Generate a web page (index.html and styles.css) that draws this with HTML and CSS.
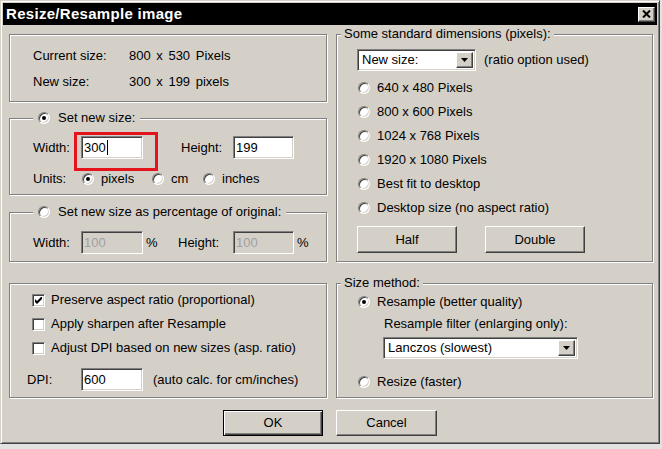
FILE: index.html
```html
<!DOCTYPE html>
<html>
<head>
<meta charset="utf-8">
<title>Resize/Resample image</title>
<link rel="stylesheet" href="styles.css">
</head>
<body>
<div class="window">
  <div class="titlebar">
    <span class="title">Resize/Resample image</span>
    <span class="close"><svg width="9" height="8" viewBox="0 0 9 8"><path d="M1 0.5 L8 7.5 M8 0.5 L1 7.5" stroke="#000" stroke-width="2" fill="none"/></svg></span>
  </div>
  <div class="content">
    <div class="col">
      <div class="group g1">
        <div class="kv"><span class="k">Current size:</span><span class="v">800 x 530 Pixels</span></div>
        <div class="kv kv2"><span class="k">New size:</span><span class="v">300 x 199 pixels</span></div>
      </div>

      <div class="group g2">
        <div class="legend legend-left"><span class="radio on"></span><span class="lbl">Set new size:</span></div>
        <div class="row size-row">
          <span class="l48">Width:</span>
          <span class="hl"><span class="field w62">300<span class="caret"></span></span></span>
          <span class="l-height">Height:</span>
          <span class="field w61">199</span>
        </div>
        <div class="row units-row">
          <span class="l49">Units:</span>
          <span class="opt o-px"><span class="radio on"></span><span class="lbl">pixels</span></span>
          <span class="opt o-cm"><span class="radio"></span><span class="lbl">cm</span></span>
          <span class="opt"><span class="radio"></span><span class="lbl">inches</span></span>
        </div>
      </div>

      <div class="group g3">
        <div class="legend legend-left"><span class="radio"></span><span class="lbl">Set new size as percentage of original:</span></div>
        <div class="row pct-row">
          <span class="l48">Width:</span>
          <span class="field w62 disabled">100</span>
          <span class="pct pct1">%</span>
          <span class="l-height2">Height:</span>
          <span class="field w61 disabled">100</span>
          <span class="pct">%</span>
        </div>
      </div>

      <div class="group g4">
        <div class="row chk-row"><span class="check"><svg width="7" height="7" viewBox="0 0 7 7"><path d="M0 2 L2 4 L7 -1 L7 2 L2 7 L0 5 Z" fill="#000"/></svg></span><span class="lbl">Preserve aspect ratio (proportional)</span></div>
        <div class="row chk-row"><span class="check"></span><span class="lbl">Apply sharpen after Resample</span></div>
        <div class="row chk-row"><span class="check"></span><span class="lbl">Adjust DPI based on new sizes (asp. ratio)</span></div>
        <div class="row dpi-row">
          <span class="l54">DPI:</span>
          <span class="field w62">600</span>
          <span class="note">(auto calc. for cm/inches)</span>
        </div>
      </div>
    </div>

    <div class="col">
      <div class="group gA">
        <div class="legend legend-right"><span>Some standard dimensions (pixels):</span></div>
        <div class="row sel-row">
          <span class="select w119"><span class="sel-text">New size:</span><span class="arrow"><svg width="7" height="4" viewBox="0 0 7 4"><path d="M0 0 H7 L3.5 4 Z" fill="#000"/></svg></span></span>
          <span class="note2">(ratio option used)</span>
        </div>
        <div class="row r-row first"><span class="radio"></span><span class="lbl">640 x 480 Pixels</span></div>
        <div class="row r-row"><span class="radio"></span><span class="lbl">800 x 600 Pixels</span></div>
        <div class="row r-row"><span class="radio"></span><span class="lbl">1024 x 768 Pixels</span></div>
        <div class="row r-row"><span class="radio"></span><span class="lbl">1920 x 1080 Pixels</span></div>
        <div class="row r-row"><span class="radio"></span><span class="lbl">Best fit to desktop</span></div>
        <div class="row r-row"><span class="radio"></span><span class="lbl">Desktop size (no aspect ratio)</span></div>
        <div class="row btn-row">
          <span class="btn">Half</span>
          <span class="btn">Double</span>
        </div>
      </div>

      <div class="group gB">
        <div class="legend legend-right"><span>Size method:</span></div>
        <div class="row r-row m-first"><span class="radio on"></span><span class="lbl">Resample (better quality)</span></div>
        <div class="row filter-lbl">Resample filter (enlarging only):</div>
        <div class="row filter-sel">
          <span class="select w195"><span class="sel-text">Lanczos (slowest)</span><span class="arrow"><svg width="7" height="4" viewBox="0 0 7 4"><path d="M0 0 H7 L3.5 4 Z" fill="#000"/></svg></span></span>
        </div>
        <div class="row r-row m-last"><span class="radio"></span><span class="lbl">Resize (faster)</span></div>
      </div>
    </div>

    <div class="actions">
      <span class="btn default ok">OK</span>
      <span class="btn cancel">Cancel</span>
    </div>
  </div>
</div>
</body>
</html>
```

FILE: styles.css
```css
* { box-sizing: border-box; }

body {
  margin: 0;
  background: #e2e2e2;
  font: 13px/16px "Liberation Sans", Arial, sans-serif;
  color: #000;
}

.window {
  width: 660px;
  height: 444px;
  background: #d4d0c8;
  border: 1px solid;
  border-color: #d4d0c8 #404040 #404040 #d4d0c8;
  box-shadow: inset 1px 1px 0 #fff, inset -1px -1px 0 #808080;
  padding: 2px;
  display: flex;
  flex-direction: column;
}

.titlebar {
  height: 22px;
  background: #000;
  display: flex;
  align-items: center;
  justify-content: space-between;
  padding: 0 2px 0 3px;
}

.title {
  color: #fff;
  font-weight: bold;
  font-size: 15px;
  letter-spacing: 0.3px;
  line-height: 18px;
}

.close {
  width: 17px;
  height: 15px;
  background: #d4d0c8;
  border: 1px solid;
  border-color: #fff #404040 #404040 #fff;
  box-shadow: inset -1px -1px 0 #808080;
  display: flex;
  align-items: center;
  justify-content: center;
}

.content {
  display: grid;
  grid-template-columns: 318px 317px;
  column-gap: 9px;
  padding: 9px 0 0 6px;
}

.col {
  display: flex;
  flex-direction: column;
}

.group {
  border: 1px solid #808080;
  box-shadow: inset 1px 1px 0 #fff, 1px 1px 0 #fff;
  display: flex;
  flex-direction: column;
  align-items: flex-start;
}

.legend {
  display: flex;
  align-items: center;
  height: 16px;
  margin-top: -9px;
  background: #d4d0c8;
}

.legend-left {
  margin-left: 0;
  padding: 0 5px;
  gap: 8px;
}

.legend-right {
  margin-left: -16px;
  padding: 0 3px;
}

.row {
  display: flex;
  align-items: center;
}

/* group 1 */
.g1 {
  height: 68px;
  padding: 13px 0 0 23px;
}
.kv { display: flex; height: 16px; }
.kv2 { margin-top: 10px; }
.k { width: 96px; }
.v { word-spacing: 2px; }

/* group 2 */
.g2 {
  height: 77px;
  margin-top: 16px;
  padding-left: 23px;
}
.size-row { margin-top: 10px; height: 23px; }
.units-row { margin-top: 12px; height: 16px; }

.l48 { width: 48px; }
.l49 { width: 49px; }
.l54 { width: 54px; }
.l-height { margin-left: 38px; width: 52px; }
.l-height2 { width: 55px; }

.hl { position: relative; display: flex; }
.hl::after {
  content: "";
  position: absolute;
  left: -7px;
  top: -4px;
  width: 78px;
  height: 33px;
  border: 3px solid #e3141b;
}

.opt { display: flex; align-items: center; gap: 7px; }
.o-px { width: 70px; }
.o-cm { width: 51px; }

/* group 3 */
.g3 {
  height: 50px;
  margin-top: 17px;
  padding-left: 23px;
}
.pct-row { margin-top: 11px; height: 23px; }
.pct { margin-left: 3px; }
.pct1 { width: 32px; }

/* group 4 */
.g4 {
  height: 115px;
  margin-top: 21px;
  padding: 8px 0 0 17px;
}
.chk-row { height: 16px; gap: 6px; margin-left: 5px; }
.chk-row + .chk-row { margin-top: 8px; }
.dpi-row { margin-top: 12px; height: 23px; }
.note { margin-left: 10px; }

/* right groups */
.gA {
  height: 228px;
  padding-left: 20px;
}
.sel-row { margin-top: 7px; height: 22px; }
.note2 { margin-left: 8px; }
.r-row { height: 16px; gap: 7px; margin-left: 1px; margin-top: 8px; }
.r-row.first { margin-top: 9px; }
.btn-row { margin-top: 10px; gap: 28px; }

.gB {
  height: 115px;
  margin-top: 21px;
  padding-left: 20px;
}
.gB .m-first { margin-top: 3px; }
.filter-lbl { margin: 6px 0 0 27px; height: 16px; }
.filter-sel { margin: 5px 0 0 26px; }
.gB .m-last { margin-top: 15px; }

/* controls */
.field {
  height: 23px;
  background: #fff;
  border: 1px solid;
  border-color: #808080 #fff #fff #808080;
  box-shadow: inset 1px 1px 0 #404040, inset -1px -1px 0 #d4d0c8;
  padding: 0 2px;
  display: flex;
  align-items: center;
}
.field.disabled { background: #d4d0c8; color: #a0a0a0; }
.w62 { width: 62px; }
.w61 { width: 61px; }

.caret {
  width: 1px;
  height: 15px;
  background: #000;
  margin-left: 1px;
}

.radio {
  flex: none;
  position: relative;
  width: 12px;
  height: 12px;
  border-radius: 50%;
  background: #fff;
  border: 1px solid;
  border-color: #808080 #fff #fff #808080;
  box-shadow: inset 1px 1px 0 #404040, inset -1px -1px 0 #d4d0c8;
}
.radio.on::after {
  content: "";
  position: absolute;
  left: 3px;
  top: 3px;
  width: 4px;
  height: 4px;
  border-radius: 50%;
  background: #000;
}

.check {
  flex: none;
  width: 13px;
  height: 13px;
  background: #fff;
  border: 1px solid;
  border-color: #808080 #fff #fff #808080;
  box-shadow: inset 1px 1px 0 #404040, inset -1px -1px 0 #d4d0c8;
  display: flex;
  align-items: center;
  justify-content: center;
}

.select {
  height: 22px;
  background: #fff;
  border: 1px solid;
  border-color: #808080 #fff #fff #808080;
  box-shadow: inset 1px 1px 0 #404040, inset -1px -1px 0 #d4d0c8;
  padding: 2px;
  display: flex;
  align-items: stretch;
}
.w119 { width: 119px; }
.w195 { width: 195px; }
.sel-text {
  flex: 1;
  padding-left: 2px;
  display: flex;
  align-items: center;
}
.arrow {
  width: 17px;
  background: #d4d0c8;
  border: 1px solid;
  border-color: #fff #404040 #404040 #fff;
  box-shadow: inset -1px -1px 0 #808080;
  display: flex;
  align-items: center;
  justify-content: center;
}

.btn {
  width: 100px;
  height: 27px;
  background: #d4d0c8;
  border: 1px solid;
  border-color: #fff #404040 #404040 #fff;
  box-shadow: inset -1px -1px 0 #808080;
  display: flex;
  align-items: center;
  justify-content: center;
}

.actions {
  grid-column: 1 / 3;
  display: grid;
  grid-template-columns: 318px 317px;
  column-gap: 9px;
  margin-top: 12px;
}
.btn.ok {
  justify-self: end;
  margin-right: 4px;
  height: 26px;
}
.btn.default {
  border: 1px solid #000;
  box-shadow: inset 1px 1px 0 #fff, inset -1px -1px 0 #404040, inset -2px -2px 0 #808080;
}
.btn.cancel { width: 101px; height: 26px; }
```
